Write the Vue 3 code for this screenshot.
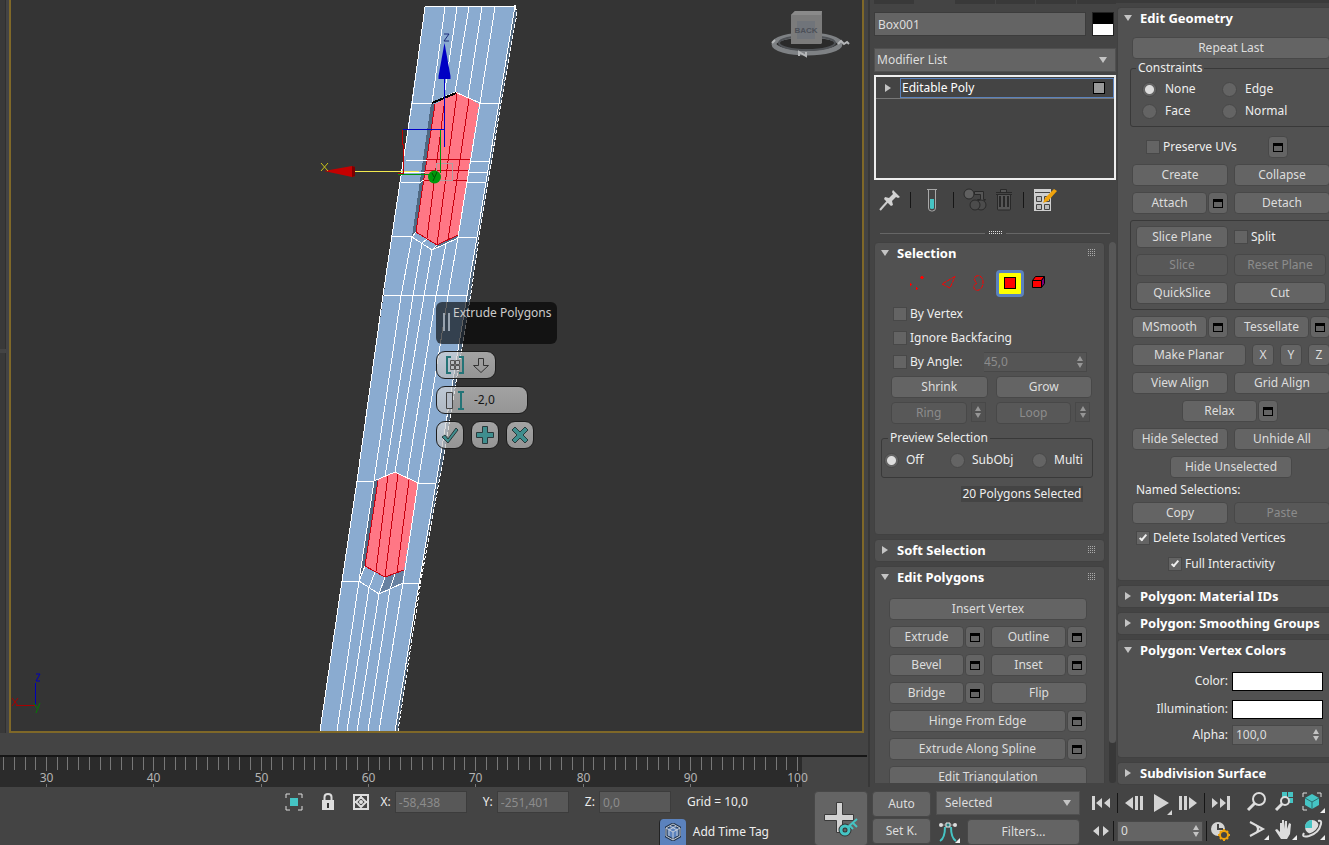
<script setup>
import { ref } from 'vue'

const objectName = ref('Box001')
const angle = ref('45,0')
const alpha = ref('100,0')
const frame = ref('0')
const preview = ref('Off')
const constraint = ref('None')
const coords = ref([
  { axis: 'X', value: '-58,438' },
  { axis: 'Y', value: '-251,401' },
  { axis: 'Z', value: '0,0' },
])

const frameX = (f) => Math.round(46 + (f - 30) * 10.73)
const ticks = Array.from({ length: 75 }, (_, i) => 26 + i).map((f) => ({
  f,
  x: frameX(f) + 0.5,
  major: f % 10 === 0,
}))

const edges = [
  '425,7 412,103 383,295 357,481 342,581 320,731',
  '425,7 515,6 499,103 477,237 467,296 436,483 419,584 395,731',
  '445,7 432,103 455,92 480,103 458,237 448,296 418,483 403,583 379,731',
  '457,7 444,97',
  '469,7 455,92',
  '482,7 468,97',
  '495,7 480,103',
  '412,237 401,296 374,481 395,472 418,483',
  '412,237 432,250 458,238',
  '422,243 413,296 385,477',
  '432,250 424,296 395,472',
  '446,244 436,296 407,477',
  '374,481 359,581 379,594 403,583',
  '359,581 337,731',
  '369,588 347,731',
  '379,594 357,731',
  '390,589 368,731',
  '412,237 416,232',
  '422,243 427,239',
  '432,250 437,245',
  '359,581 365,566',
  '369,588 375,572',
  '379,594 385,577',
  '390,589 395,574',
  '412,103 432,103',
  '406,160 427,160',
  '404,172 425,172',
  '401,182 408,182 419,183 424,180',
  '392,236 412,236',
  '480,103 500,103',
  '470,161 489,161',
  '468,172 488,172',
  '467,182 486,183',
  '458,237 477,237',
  '384,295 436,295 467,296',
  '357,481 374,481',
  '418,483 436,483',
  '342,581 359,581',
  '403,583 419,584',
]
const redEdges = [
  '435,104 416,232 437,245 458,235',
  '445,98 427,238',
  '457,93 437,245',
  '469,99 448,240',
  '427,159 470,159',
  '425,170 468,170',
  '424,180 467,180',
  '378,481 365,566 385,577 404,570',
  '388,475 376,571',
  '398,474 385,577',
  '409,480 397,573',
]
</script>

<template>
  <div class="app">
    <div class="work">
      <main class="left">
        <div class="stage">
          <div class="gutter"><i></i><i></i></div>
          <section class="viewport" aria-label="Viewport">
            <svg class="scene" width="851" height="731" viewBox="11 0 851 731">
              <g shape-rendering="crispEdges">
                <path d="M515 6l2 7-16 90-22 134-8 56-28 167-24 124-21 147h-4l22-150 33-198 31-186z" fill="#52687f" />
                <path d="M425 7l90-1-16 97-22 134-10 59-31 187-17 101-24 147H320l37-250z" fill="#8aabd0" />
                <path d="M431 104l4 0-19 128-4 5zM374 481l4-1-13 86-6 15z" fill="#4f6881" />
                <path d="M385 577l19-7-2 13-23 10z" fill="#6781a1" />
                <path d="M437 245l21-10 0 3-25 11z" fill="#59708c" />
                <path d="M435 104l22-12 22 12-21 131-21 10-21-13zM378 480l17-8 23 11-14 87-19 7-20-11z" fill="#ff7785" />
                <g fill="none" stroke="#c8000e">
                  <polyline v-for="p in redEdges" :key="p" :points="p" />
                </g>
                <g fill="none" stroke="#fff">
                  <polyline v-for="p in edges" :key="p" :points="p" />
                  <polyline points="515,6 517,13 501,103 479,237 471,293 443,460 421,580 398,731" stroke-dasharray="4 2" />
                </g>
                <path d="M432 103l24-10" stroke="#000" stroke-width="2" />
                <rect x="436.500" y="163.500" width="16" height="17" fill="none" stroke="#b09fa0" />
              </g>
              <g fill="none" shape-rendering="crispEdges">
                <path d="M355 171.500h64" stroke="#f2ea4e" />
                <path d="M402.500 129.500h42M444.500 78v69" stroke="#0000c8" />
                <path d="M402.500 130v14l1 1v28M398 173.500h6" stroke="#c00000" />
                <path d="M440.500 130v43M398 174.500h36" stroke="#00960a" />
              </g>
              <path d="M444.500 43l6 33v3h-12v-3z" fill="#0000c4" />
              <path d="M324 171l28-5 3 1v9l-3 1z" fill="#c40000" />
              <path d="M352 166l3 1v9l-3 1z" fill="#7c0000" />
              <circle cx="434.500" cy="177" r="6.500" fill="#009a0c" />
              <g fill="none">
                <path d="M432 173l2 4M437 172l-4 9" stroke="#054d08" />
                <path d="M444 34h5l-5 7h5" stroke="#1c2a78" />
                <path d="M321 163l7 8M328 163l-7 8" stroke="#c9c419" />
                <path d="M35.500 683v22" stroke="#0000b8" />
                <path d="M36 674h4l-4 7h4" stroke="#0000b8" />
                <path d="M16 705.500h20M12 698l6 8M18 698l-6 8" stroke="#a80000" />
                <path d="M34 703l3 5M40 703l-4 10" stroke="#008000" />
              </g>
              <g>
                <ellipse cx="807" cy="44" rx="33" ry="9" fill="#2a2a2a" stroke="#7e8184" stroke-width="5" />
                <ellipse cx="807" cy="43" rx="28" ry="7" fill="none" stroke="#4f5256" stroke-width="2" />
                <path d="M791 15l4-4h27v32l-1 1h-30z" fill="#7b7b7b" />
                <path d="M791 15l4-4h27l-1 4z" fill="#8a8a8a" />
                <path d="M797 21h18v18h-18z" fill="#70747a" />
                <text x="806" y="33" text-anchor="middle" class="cube">BACK</text>
                <path d="M799 56v-4l7 4v-4M838 44l3-3 3 3 3-2 2 2M772 43l3-3" fill="none" stroke="#b4b6b8" stroke-width="2" />
              </g>
            </svg>
            <div class="caddy">
              <div class="caddy-title"><i></i><span>Extrude Polygons</span></div>
              <button class="pill group" aria-label="Extrusion type">
                <svg width="50" height="22" viewBox="0 0 50 22" fill="none">
                  <path d="M10 3H6v16h4M18 3h4v16h-4" stroke="#247477" stroke-width="2" />
                  <path d="M9.500 6.500h4v4h-4zM14.500 6.500h4v4h-4zM9.500 11.500h4v4h-4zM14.500 11.500h4v4h-4z" stroke="#555" fill="#b9bcbf" />
                  <path d="M37.500 4.500h5v7h5l-7.500 7-7.500-7h5z" stroke="#333" />
                </svg>
              </button>
              <label class="pill amount" aria-label="Height">
                <svg width="22" height="22" viewBox="0 0 22 22" fill="none">
                  <path d="M3.500 3.500h6v16h-6z" stroke="#444" fill="#b4bcc7" />
                  <path d="M15 3h6M18 3v17M15 20h6" stroke="#247477" stroke-width="2" />
                </svg>
                <input value="-2,0" aria-label="Extrusion height" />
              </label>
              <div class="confirm">
                <button class="pill" aria-label="OK"><svg width="20" height="20" viewBox="0 0 20 20"><path d="M2 12l3-2 3 4L16 3l2 2L8 18z" fill="#3f8e8e" stroke="#28393b" /></svg></button>
                <button class="pill" aria-label="Apply and continue"><svg width="20" height="20" viewBox="0 0 20 20"><path d="M7.500 1.500h5v6h6v5h-6v6h-5v-6h-6v-5h6z" fill="#3f8e8e" stroke="#28393b" /></svg></button>
                <button class="pill" aria-label="Cancel"><svg width="20" height="20" viewBox="0 0 20 20"><path d="M2 5l3-3 5 5 5-5 3 3-5 5 5 5-3 3-5-5-5 5-3-3 5-5z" fill="#3f8e8e" stroke="#28393b" /></svg></button>
              </div>
            </div>
          </section>
        </div>
        <svg class="ruler" width="100%" height="32">
          <rect width="802" height="30" fill="#2b2b2b" />
          <g v-for="t in ticks" :key="t.f">
            <path :d="t.major ? `M${t.x} 0v14M${t.x} 27v3` : `M${t.x} 0v13`" stroke="#777" />
            <text v-if="t.major" :x="t.x" y="25" text-anchor="middle">{{ t.f }}</text>
          </g>
        </svg>
      </main>

      <aside class="modify">
        <div class="tabs"><i></i><i class="on"></i><i></i><i></i><i></i><i></i></div>
        <div class="name-row">
          <input v-model="objectName" aria-label="Object name" />
          <button class="swatch" aria-label="Object color"></button>
        </div>
        <div class="select modlist">
          <select aria-label="Modifier List"><option>Modifier List</option></select><i class="tri down"></i>
        </div>
        <div class="stack">
          <div class="stack-row"><i class="tri right"></i><span>Editable Poly<b></b></span></div>
        </div>
        <div class="stack-tools">
          <button aria-label="Pin stack"><svg width="22" height="22" viewBox="0 0 22 22"><path d="M1 21l8-9" stroke="#ccc" stroke-width="2" /><path d="M14 1l7 7-2 1-2-1-4 4 1 4-2 1-7-7 1-2 4 1 4-4-1-2z" fill="#d2d2d2" /></svg></button>
          <hr />
          <button class="tube" aria-label="Show end result"><svg width="12" height="24" viewBox="0 0 12 24"><path d="M1 1.500h10M2.500 2v18q0 3 3 3h1q3 0 3-3V2" fill="none" stroke="#a8a8a8" /><path d="M4 11h4v9q0 1-2 1t-2-1z" fill="#45c4c4" /></svg></button>
          <hr />
          <button class="unique" aria-label="Make unique"><svg width="24" height="24" viewBox="0 0 24 24" fill="none" stroke="#292929"><path d="M11.500 3.500h9v8h2l-4 5-4-5h3v-5h-6z" fill="#555" /><circle cx="6" cy="6" r="5" fill="#606060" /><circle cx="18" cy="17" r="5" fill="#4c4c4c" /><circle cx="12" cy="17" r="5" fill="#4c4c4c" /></svg></button>
          <button class="trash" aria-label="Remove modifier"><svg width="18" height="24" viewBox="0 0 18 24" fill="none" stroke="#292929"><path d="M1 4.500h16M5.500 4V1.500h6V4M1 6.500h16M2.500 7v14q0 1 1 1h11q1 0 1-1V7" fill="#565656" /><path d="M5 8v11M9 8v11M13 8v11" stroke-width="2" /></svg></button>
          <hr />
          <button class="config" aria-label="Configure modifier sets"><svg width="24" height="24" viewBox="0 0 24 24"><path d="M1 1h17v22H1z" fill="#cfcfcf" /><path d="M2 4.500h15M3.500 8.500h5v5h-5zM11.500 8.500h5v5h-5zM3.500 16.500h5v5h-5zM11.500 16.500h5v5h-5z" fill="#bbb" stroke="#444" /><path d="M10 15l2-5 9-9 3 2-9 10z" fill="#f0a30c" /></svg></button>
        </div>
        <div class="splitter"><i></i><svg width="13" height="4" viewBox="0 0 13 4"><path d="M0 .5h13M0 2.500h13" stroke="#ddd" stroke-dasharray="1 1" /></svg><i></i></div>

        <div class="scroll">
          <div class="rollouts">
            <section class="rollout selection">
              <button class="head"><i class="tri down"></i>Selection<svg class="grip" width="8" height="8" viewBox="0 0 8 8"><path d="M0 .5h8M0 2.500h8M0 4.500h8M0 6.500h8" stroke="#aaa" stroke-dasharray="1 1" /></svg></button>
              <div class="modes">
                <button aria-label="Vertex"><svg width="22" height="22" viewBox="0 0 22 22" fill="#f00"><path d="M14 5h4v1h-4zM15 4h2v3h-2zM4 12h2v1H4zM4 11h1v3H4zM10 16h2v1h-2zM10 15h1v3h-1z" /></svg></button>
                <button aria-label="Edge"><svg width="22" height="22" viewBox="0 0 22 22" fill="none" stroke="#f00"><path d="M19 4.500L6 12l8 4z" stroke-dasharray="4 1" /></svg></button>
                <button aria-label="Border"><svg width="22" height="22" viewBox="0 0 22 22" fill="none" stroke="#f00"><path d="M9 5q2-2 5-1 3 2 3 6 0 6-4 8-4 1-5-2-1-3 3-5-4-3-2-6z" stroke-dasharray="4 1" /></svg></button>
                <button class="active" aria-label="Polygon"><i></i></button>
                <button aria-label="Element"><svg width="14" height="14" viewBox="0 0 14 14" stroke="#000"><path d="M.5 4.500l3-4h9l-3 4z" fill="#f00" /><path d="M9.500 4.500l3-4v7l-3 4z" fill="#7b007b" /><path d="M.5 4.500h9v7h-9z" fill="#f00" /></svg></button>
              </div>
              <label class="check"><input type="checkbox" />By Vertex</label>
              <label class="check"><input type="checkbox" />Ignore Backfacing</label>
              <div class="angle">
                <label class="check"><input type="checkbox" />By Angle:</label>
                <div class="spin off"><input v-model="angle" disabled aria-label="Angle" /><i class="arrows"></i></div>
              </div>
              <div class="sel-buttons">
                <button class="btn">Shrink</button>
                <button class="btn">Grow</button>
                <div class="pair"><button class="btn" disabled>Ring</button><span class="mini"><i class="arrows"></i></span></div>
                <div class="pair"><button class="btn" disabled>Loop</button><span class="mini"><i class="arrows"></i></span></div>
              </div>
              <fieldset class="preview">
                <legend>Preview Selection</legend>
                <label v-for="o in ['Off', 'SubObj', 'Multi']" :key="o"><input v-model="preview" type="radio" name="preview" :value="o" />{{ o }}</label>
              </fieldset>
              <p class="count">20 Polygons Selected</p>
            </section>
            <section class="rollout">
              <button class="head"><i class="tri right"></i>Soft Selection<svg class="grip" width="8" height="8" viewBox="0 0 8 8"><path d="M0 .5h8M0 2.500h8M0 4.500h8M0 6.500h8" stroke="#aaa" stroke-dasharray="1 1" /></svg></button>
            </section>
            <section class="rollout">
              <button class="head"><i class="tri down"></i>Edit Polygons<svg class="grip" width="8" height="8" viewBox="0 0 8 8"><path d="M0 .5h8M0 2.500h8M0 4.500h8M0 6.500h8" stroke="#aaa" stroke-dasharray="1 1" /></svg></button>
              <div class="grid polys">
                <button class="btn wide">Insert Vertex</button>
                <div v-for="n in ['Extrude', 'Outline', 'Bevel', 'Inset', 'Bridge']" :key="n" class="pair">
                  <button class="btn">{{ n }}</button><button class="btn win" :aria-label="n + ' settings'"></button>
                </div>
                <button class="btn">Flip</button>
                <div v-for="n in ['Hinge From Edge', 'Extrude Along Spline']" :key="n" class="pair wide">
                  <button class="btn">{{ n }}</button><button class="btn win" :aria-label="n + ' settings'"></button>
                </div>
                <button class="btn wide">Edit Triangulation</button>
              </div>
            </section>
          </div>
          <div class="bar"><i></i></div>
        </div>
      </aside>

      <aside class="geometry">
        <section class="rollout">
          <button class="head"><i class="tri down"></i>Edit Geometry</button>
          <div class="grid first"><button class="btn wide">Repeat Last</button></div>
          <fieldset class="constraints">
            <legend>Constraints</legend>
            <label v-for="o in ['None', 'Edge', 'Face', 'Normal']" :key="o"><input v-model="constraint" type="radio" name="constraint" :value="o" />{{ o }}</label>
          </fieldset>
          <div class="uvs"><label class="check"><input type="checkbox" />Preserve UVs</label><button class="btn win" aria-label="Preserve UVs settings"></button></div>
          <div class="grid">
            <button class="btn">Create</button><button class="btn">Collapse</button>
            <div class="pair"><button class="btn">Attach</button><button class="btn win" aria-label="Attach list"></button></div>
            <button class="btn">Detach</button>
          </div>
          <div class="slice">
            <button class="btn">Slice Plane</button><label class="check"><input type="checkbox" />Split</label>
            <button class="btn" disabled>Slice</button><button class="btn" disabled>Reset Plane</button>
            <button class="btn">QuickSlice</button><button class="btn">Cut</button>
          </div>
          <div class="grid">
            <div class="pair"><button class="btn">MSmooth</button><button class="btn win" aria-label="MSmooth settings"></button></div>
            <div class="pair"><button class="btn">Tessellate</button><button class="btn win" aria-label="Tessellate settings"></button></div>
            <div class="planar wide"><button class="btn">Make Planar</button><button class="btn">X</button><button class="btn">Y</button><button class="btn">Z</button></div>
            <button class="btn">View Align</button><button class="btn">Grid Align</button>
            <div class="pair wide relax"><button class="btn">Relax</button><button class="btn win" aria-label="Relax settings"></button></div>
            <button class="btn">Hide Selected</button><button class="btn">Unhide All</button>
            <button class="btn wide unselected">Hide Unselected</button>
          </div>
          <p class="named">Named Selections:</p>
          <div class="grid"><button class="btn">Copy</button><button class="btn" disabled>Paste</button></div>
          <label class="check isolated"><input type="checkbox" checked />Delete Isolated Vertices</label>
          <label class="check full"><input type="checkbox" checked />Full Interactivity</label>
        </section>
        <section class="rollout"><button class="head"><i class="tri right"></i>Polygon: Material IDs</button></section>
        <section class="rollout"><button class="head"><i class="tri right"></i>Polygon: Smoothing Groups</button></section>
        <section class="rollout">
          <button class="head"><i class="tri down"></i>Polygon: Vertex Colors</button>
          <div class="colors">
            <span>Color:</span><button class="white" aria-label="Color"></button>
            <span>Illumination:</span><button class="white" aria-label="Illumination"></button>
            <label for="alpha">Alpha:</label>
            <div class="spin"><input id="alpha" v-model="alpha" /><i class="arrows"></i></div>
          </div>
        </section>
        <section class="rollout"><button class="head"><i class="tri right"></i>Subdivision Surface</button></section>
      </aside>
    </div>

    <footer class="status">
      <div class="info">
        <div class="coords">
          <button aria-label="Isolate selection"><svg width="18" height="18" viewBox="0 0 18 18"><path d="M1 5V1h4M13 1h4v4M17 13v4h-4M5 17H1v-4" fill="none" stroke="#ddd" /><path d="M5 5h8v8H5z" fill="#45c4c4" /></svg></button>
          <button aria-label="Selection lock"><svg width="12" height="18" viewBox="0 0 12 18"><path d="M2.500 8V4q0-3 3.500-3t3.500 3v4" fill="none" stroke="#ddd" stroke-width="2" /><path d="M0 7h12v10H0z" fill="#ddd" /><path d="M6 10v5" stroke="#333" stroke-width="2" /></svg></button>
          <button aria-label="Transform type-in mode"><svg width="16" height="18" viewBox="0 0 16 18" fill="none" stroke="#ddd" stroke-width="2"><path d="M1 2h14v14H1z" /><path d="M8 4l5 5-5 5-5-5zM8 2v3M8 13v3M1 9h3M12 9h3" /><circle cx="8" cy="9" r="1" /></svg></button>
          <label v-for="c in coords" :key="c.axis">{{ c.axis }}:<input v-model="c.value" disabled /></label>
          <span class="gridsize">Grid = 10,0</span>
        </div>
        <div class="tag">
          <button aria-label="Time tag"><svg width="16" height="18" viewBox="0 0 16 18" fill="none"><path d="M8 1l7 4v8l-7 4-7-4V5z" stroke="#26384f" stroke-width="3" /><path d="M8 1l7 4v8l-7 4-7-4V5zM1 5l7 4 7-4M8 9v8M5 3l7 4v6M11 3L4 7v6" stroke="#c4ccd8" /></svg></button>
          <span>Add Time Tag</span>
        </div>
      </div>
      <button class="btn key" aria-label="Set keys"><svg width="36" height="36" viewBox="0 0 36 36"><path d="M13.500 1.500h6v12h11v6h-11v12h-6v-12h-12v-6h12z" fill="#d2d2d2" stroke="#3a3a3a" /><circle cx="22" cy="29" r="4" fill="none" stroke="#333" stroke-width="5" /><circle cx="22" cy="29" r="4" fill="none" stroke="#45c4c4" stroke-width="3" /><path d="M25 26l9-8M30 22l4 4M27 25l3 3" stroke="#45c4c4" stroke-width="2" /></svg></button>
      <div class="keys"><button class="btn">Auto</button><button class="btn">Set K.</button></div>
      <div class="filters">
        <div class="select"><select aria-label="Key selection set"><option>Selected</option></select><i class="tri down"></i></div>
        <div class="filter-row">
          <button class="icon" aria-label="Default tangents"><svg width="24" height="22" viewBox="0 0 24 22"><path d="M4 20q5-3 5-14M20 20q-5-3-5-14" fill="none" stroke="#45c4c4" stroke-width="2" /><path d="M5 4h14" stroke="#999" /><circle cx="5" cy="4" r="2" fill="#ddd" /><circle cx="19" cy="4" r="2" fill="#ddd" /><path d="M10 2h4v4h-4z" fill="#287d7d" stroke="#eee" /><path d="M24 17v5h-5z" fill="#eee" /></svg></button>
          <button class="btn">Filters...</button>
        </div>
      </div>
      <div class="transport">
        <div class="line">
          <button aria-label="Go to start"><svg width="18" height="16" viewBox="0 0 18 16" fill="#d4d4d4"><path d="M0 1h3v14H0zM10 3v10L4 8zM18 3v10l-6-5z" /></svg></button><hr />
          <button aria-label="Previous frame"><svg width="18" height="16" viewBox="0 0 18 16" fill="#d4d4d4"><path d="M8 2v12L0 8zM10 1h3v14h-3zM15 1h3v14h-3z" /></svg></button>
          <button aria-label="Play"><svg width="22" height="24" viewBox="0 0 22 24" fill="#d4d4d4"><path d="M4 3l15 9-15 9zM22 19v5h-5z" /></svg></button>
          <button aria-label="Next frame"><svg width="18" height="16" viewBox="0 0 18 16" fill="#d4d4d4"><path d="M10 2v12l8-6zM0 1h3v14H0zM5 1h3v14H5z" /></svg></button><hr />
          <button aria-label="Go to end"><svg width="18" height="16" viewBox="0 0 18 16" fill="#d4d4d4"><path d="M15 1h3v14h-3zM0 3v10l6-5zM8 3v10l6-5z" /></svg></button>
        </div>
        <div class="line">
          <button aria-label="Key mode"><svg width="18" height="12" viewBox="0 0 18 12" fill="#d4d4d4"><path d="M7 1v10L1 6zM11 1v10l6-5z" /></svg></button><hr />
          <div class="spin"><input v-model="frame" aria-label="Current frame" /><i class="arrows"></i></div><hr />
          <button aria-label="Time configuration"><svg width="20" height="20" viewBox="0 0 20 20"><circle cx="8" cy="8" r="7" fill="#d4d4d4" /><path d="M8 3v5h5" fill="none" stroke="#444" stroke-width="2" /><circle cx="14" cy="14" r="4" fill="#444" stroke="#f0a30c" stroke-width="2" /><path d="M14 8v2M14 18v2M8 14h2M18 14h2M10 10l1 1M17 17l1 1M18 10l-1 1M11 17l-1 1" stroke="#f0a30c" stroke-width="2" /></svg></button>
        </div>
      </div>
      <div class="nav">
        <button aria-label="Zoom"><svg width="24" height="22" viewBox="0 0 24 22" fill="none" stroke="#ddd" stroke-width="2"><circle cx="14" cy="8" r="6" /><path d="M10 12l-7 7" stroke-width="3" /></svg></button>
        <button aria-label="Zoom all"><svg width="24" height="22" viewBox="0 0 24 22" fill="none"><path d="M9 1h5v5H9zM15 1h5v5h-5zM15 7h5v5h-5z" fill="#45c4c4" /><circle cx="12" cy="10" r="4" stroke="#ddd" stroke-width="2" fill="#444" /><path d="M9 13l-6 6" stroke="#ddd" stroke-width="3" /></svg></button>
        <button aria-label="Zoom extents"><svg width="24" height="22" viewBox="0 0 24 22" fill="none"><path d="M2 6V2h4M16 2h4v4M2 15v4h4" stroke="#ddd" /><path d="M11 3l7 4v7l-7 4-7-4V7z" fill="#45c4c4" /><path d="M4 7l7 4 7-4M11 11v7" stroke="#2b6d6d" /><path d="M24 17v5h-5z" fill="#eee" /></svg></button>
        <button aria-label="Field of view"><svg width="24" height="22" viewBox="0 0 24 22" fill="none"><path d="M5 4l13 7-13 7M11 7q4 4 0 8" stroke="#ddd" stroke-width="2" /><path d="M24 17v5h-5z" fill="#eee" /></svg></button>
        <button aria-label="Pan"><svg width="24" height="22" viewBox="0 0 24 22"><path d="M8 21l-6-9 2-1 3 3V5h2v6V2h2v9l1-8h2v8l2-6 2 1-1 10-3 5z" fill="#ddd" /><path d="M24 17v5h-5z" fill="#eee" /></svg></button>
        <button aria-label="Orbit"><svg width="24" height="22" viewBox="0 0 24 22" fill="none"><circle cx="11" cy="9" r="7" fill="#ddd" /><path d="M11 2a7 7 0 00-7 8h7z" fill="#45c4c4" /><path d="M3 15q-3 5 5 3 10-3 12-12 1-4-3-3" stroke="#444" stroke-width="4" /><path d="M3 15q-3 5 5 3 10-3 12-12 1-4-3-3" stroke="#ddd" stroke-width="2" /><path d="M24 17v5h-5z" fill="#eee" /></svg></button>
      </div>
    </footer>
  </div>
</template>

<style>
html, body { margin: 0; background: #444; }
</style>

<style scoped>
* { box-sizing: border-box; }
.app { display: flex; flex-direction: column; height: 100vh; overflow: hidden; background: #444; color: #eee; font: 12px/16px "Noto Sans", "Open Sans", sans-serif; }
button, input, select { font: inherit; color: inherit; margin: 0; padding: 0; border: 0; background: none; }
button svg, .ruler { display: block; }
p { margin: 0; }
i { display: block; flex: none; }
.work { flex: 1; min-height: 0; display: grid; grid-template-columns: minmax(0, 1fr) 249px 213px; }

.left { display: flex; flex-direction: column; min-height: 0; overflow: hidden; }
.stage { flex: 1; min-height: 0; display: flex; margin: 0 3px 22px 0; }
.gutter { width: 9px; display: flex; flex-direction: column; gap: 4px; }
.gutter i { flex: 12; width: 6px; background: #393939; border-right: 1px solid #303030; }
.gutter i:first-child { flex: 11; }
.viewport { flex: 1; position: relative; overflow: hidden; background: #343434; border: 2px solid #7f6828; border-top: 0; }
.scene { display: block; }
.cube { font: bold 8px "Liberation Sans", sans-serif; fill: #4c5058; }
.ruler { flex: none; border-top: 2px solid #161616; }
.ruler text { font-size: 12px; fill: #b4b4b4; }

.caddy { position: absolute; left: 425px; top: 302px; display: flex; flex-direction: column; align-items: flex-start; gap: 7px; }
.caddy-title { display: flex; width: 121px; height: 42px; padding: 3px 0 0 7px; gap: 3px; border-radius: 6px; background: rgb(0 0 0 / 62%); color: #ccc; }
.caddy-title i { width: 7px; height: 18px; margin-top: 8px; border: solid #98a3b0; border-width: 0 2px; }
.caddy-title span { white-space: nowrap; }
.pill { display: flex; align-items: center; justify-content: center; width: 28px; height: 28px; border: 1px solid #1d1d1d; border-radius: 9px; background: linear-gradient(rgb(215 215 215 / 68%), rgb(190 190 190 / 70%)); }
.pill.group { width: 60px; }
.pill.amount { width: 92px; justify-content: flex-start; padding-left: 6px; }
.amount input { width: 50px; padding-left: 9px; color: #151515; }
.confirm { display: flex; gap: 7px; }

.btn { height: 22px; min-width: 0; display: flex; align-items: center; justify-content: center; background: #646464; border: 1px solid #484848; border-radius: 4px; color: #ddd; white-space: nowrap; }
.btn:disabled { background: #585858; color: #8c8c8c; }
.win { width: 20px; flex: none; }
.win::before { content: ""; width: 8px; height: 5px; border: 1px solid #000; border-top-width: 3px; }
.pair { display: flex; gap: 1px; }
.pair .btn:first-child { flex: 1; }
.tri { width: 0; height: 0; border: 4px solid transparent; }
.tri.down { border-top: 6px solid #c4c4c4; border-bottom: 0; }
.tri.right { border-left: 6px solid #c4c4c4; border-right: 0; }
.arrows { width: 6px; height: 12px; display: flex; flex-direction: column; justify-content: space-between; }
.arrows::before, .arrows::after { content: ""; border: 3px solid transparent; }
.arrows::before { border-bottom: 5px solid #c4c4c4; border-top: 0; }
.arrows::after { border-top: 5px solid #c4c4c4; border-bottom: 0; }
.off .arrows, .mini .arrows { opacity: .6; }
.spin { display: flex; align-items: center; height: 20px; padding: 0 3px; background: #646464; border: 1px solid #484848; }
.spin input { flex: 1; width: 0; color: #ddd; }
.spin.off { background: #555; }
.spin.off input { color: #8c8c8c; }
.select { display: flex; align-items: center; height: 24px; padding: 0 8px; background: #646464; border: 1px solid #505050; }
.select select { flex: 1; min-width: 0; appearance: none; color: #ddd; }
.check { display: flex; align-items: center; gap: 3px; height: 24px; }
.check input { appearance: none; width: 14px; height: 14px; background: #646464; border: 1px solid #484848; }
.check input:checked { display: flex; justify-content: center; padding-top: 1px; }
.check input:checked::before { content: ""; width: 2px; height: 6px; border: solid #eee; border-width: 0 2px 2px 0; transform: rotate(40deg); }
input[type="radio"] { appearance: none; width: 15px; height: 15px; border-radius: 50%; background: #646464; border: 1px solid #484848; }
input[type="radio"]:checked { background: radial-gradient(circle, #ddd 4px, #646464 5px); }

.modify { display: flex; flex-direction: column; min-width: 0; min-height: 0; border-left: 2px solid #383838; margin-left: 1px; padding-left: 4px; }
.tabs { display: flex; gap: 1px; height: 4px; margin-bottom: 8px; }
.tabs i { flex: 1; background: #393939; }
.tabs .on { background: #444; }
.name-row { display: flex; justify-content: space-between; margin: 0 2px 12px 0; }
.name-row input { width: 212px; height: 24px; padding: 0 3px; background: #646464; border: 1px solid #3c3c3c; color: #ddd; }
.swatch { width: 22px; height: 24px; border: 1px solid #222; background: linear-gradient(#000 50%, #fff 50%); }
.modlist { padding: 0 8px 0 2px; }
.stack { height: 105px; margin-top: 3px; border: 2px solid #eee; }
.stack-row { display: flex; align-items: center; gap: 9px; height: 22px; padding-left: 9px; border-bottom: 1px solid #777; }
.stack-row span { flex: 1; display: flex; align-items: center; justify-content: space-between; height: 20px; padding: 0 8px 0 1px; border: 1px solid #5b82bd; color: #fff; }
.stack-row b { width: 12px; height: 12px; background: #999; border: 1px solid #000; }
.stack-tools { display: flex; align-items: center; height: 40px; padding-left: 5px; }
.stack-tools hr { width: 1px; height: 16px; margin: 0 0 0 9px; border: 0; background: #161616; }
.stack-tools .tube { margin: 0 6px 0 15px; }
.stack-tools .unique { margin: 0 6px 0 9px; }
.stack-tools .trash { margin: 0 1px 0 2px; }
.stack-tools .config { margin-left: 9px; }
.splitter { display: flex; align-items: center; gap: 4px; height: 20px; margin: 6px 6px 0; padding-bottom: 6px; }
.splitter i { flex: 1; height: 1px; background: #666; }
.scroll { flex: 1; min-height: 0; display: flex; gap: 4px; overflow: hidden; margin: -4px 0 4px; }
.rollouts { width: 231px; display: flex; flex-direction: column; gap: 4px; }
.rollout { flex: none; background: #515151; border: 1px solid #414141; border-radius: 4px; overflow: hidden; }
.head { display: flex; align-items: center; gap: 8px; width: 100%; height: 21px; padding: 0 8px 2px 6px; font-size: 13px; font-weight: 700; color: #fff; text-align: left; white-space: nowrap; }
.head .tri.right { margin: 0 1px; }
.grip { margin: 0 0 0 auto; }
.bar { width: 7px; background: #383838; border-radius: 4px; }
.bar i { height: 501px; background: #575757; border-radius: 4px; }
.selection { height: 293px; }
.modes { display: flex; align-items: center; height: 28px; margin: 5px 0 5px 31px; gap: 8px; }
.modes .active { display: grid; place-items: center; width: 28px; height: 27px; border: 3px solid #5b82bd; border-radius: 4px; background: #ff0; }
.modes .active i { width: 12px; height: 12px; background: #f00; border: 1px solid #000; }
.selection > .check, .angle { margin-left: 18px; }
.angle { display: flex; justify-content: space-between; align-items: center; margin-right: 17px; }
.angle .spin { width: 103px; border-left: 0; padding-left: 0; }
.sel-buttons { display: grid; grid-template-columns: 1fr 1fr; gap: 4px 8px; margin: 2px 12px 0 16px; }
.sel-buttons .pair { gap: 4px; padding-right: 2px; }
.mini { display: grid; place-items: center; width: 15px; height: 20px; border: 1px solid #484848; }
fieldset { margin: 0; padding: 0; border: 1px solid #393939; border-radius: 3px; min-width: 0; }
legend { padding: 0 2px; margin-left: 4px; }
fieldset label { display: flex; align-items: center; gap: 8px; }
.preview { display: grid; grid-template-columns: 66px 82px 1fr; height: 48px; margin: 6px 11px 0 6px; padding: 6px 0 0 2px; align-items: start; }
.preview label { gap: 7px; }
.count { width: 122px; margin: 8px 0 0 86px; background: #444; text-align: center; white-space: nowrap; }
.grid { display: grid; grid-template-columns: 96px 96px; gap: 6px; width: 198px; margin-left: 14px; }
.wide { grid-column: 1 / -1; }
.polys { margin-top: 10px; }

.geometry { display: flex; flex-direction: column; gap: 4px; padding: 4px 0 4px 1px; border-top: 4px solid #3a3a3a; margin-top: -1px; min-height: 0; overflow: hidden; }
.geometry .rollout { border-right: 0; border-radius: 4px 0 0 4px; }
.geometry .rollout:first-child { height: 574px; }
.grid.first { margin-top: 8px; }
.constraints { display: grid; grid-template-columns: 80px 1fr; align-content: start; gap: 6px 0; height: 67px; margin: 1px -3px 0 12px; padding: 5px 0 0 11px; }
.constraints legend { margin-left: -6px; }
.uvs { display: flex; align-items: center; gap: 31px; height: 37px; padding-top: 3px; margin-left: 28px; }
.slice { display: grid; grid-template-columns: 92px 92px; gap: 6px; margin: 6px -3px 6px 12px; padding: 5px; border: 1px solid #393939; border-radius: 3px; }
.slice .check { height: 22px; }
.planar { display: flex; justify-content: space-between; }
.planar .btn { width: 22px; }
.planar .btn:first-child { width: 114px; }
.relax { width: 96px; margin-left: 50px; }
.unselected { width: 122px; margin-left: 38px; }
.named { height: 24px; padding: 4px 0 0 18px; }
.isolated { margin: 2px 0 2px 18px; }
.full { margin-left: 50px; }
.colors { display: grid; grid-template-columns: 110px 91px; grid-template-rows: 28px 28px 24px; column-gap: 4px; align-items: center; justify-items: end; padding: 6px 0 10px; }
.white { width: 91px; height: 19px; background: #fff; border: 1px solid #000; }
.colors .spin { width: 91px; }

.status { flex: none; display: flex; height: 58px; padding-top: 4px; }
.info { flex: 1; min-width: 0; display: flex; flex-direction: column; align-items: flex-end; }
.coords { display: flex; align-items: center; height: 29px; gap: 16px; padding-right: 66px; white-space: nowrap; }
.coords button { margin-right: 3px; }
.coords label { display: flex; align-items: center; gap: 4px; }
.coords label:first-of-type { margin-left: -7px; }
.coords input { width: 72px; height: 22px; padding: 0 3px; background: #585858; border: 1px solid #3c3c3c; color: #8c8c8c; }
.tag { display: flex; align-items: center; gap: 7px; padding: 6px 45px 0 0; }
.tag button { display: grid; place-items: center; width: 27px; height: 26px; border-left: 1px solid #222; border-radius: 4px 4px 0 0; background: #5b82bd; }
.key { width: 54px; height: 55px; }
.keys { display: flex; flex-direction: column; gap: 1px; width: 59px; margin: 0 5px 0 4px; }
.keys .btn { height: 26px; }
.filters { width: 144px; display: flex; flex-direction: column; gap: 4px; }
.filter-row { display: flex; gap: 7px; }
.filter-row .btn { flex: 1; height: 26px; }
.transport { width: 138px; margin-left: 12px; display: flex; flex-direction: column; gap: 4px; }
.line { display: flex; align-items: center; justify-content: space-between; height: 24px; }
.line hr { width: 1px; height: 20px; margin: 0; border: 0; background: #161616; }
.line .spin { width: 86px; height: 21px; }
.nav { display: grid; grid-template-columns: repeat(3, 24px); gap: 5px 4px; margin: 0 4px 0 15px; align-content: start; }
.nav button { height: 22px; }
</style>
